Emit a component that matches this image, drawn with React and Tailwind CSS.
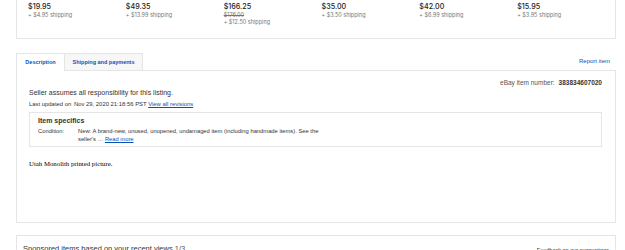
import React from "react";

const prices = [
  { price: "$19.95", ship: "+ $4.95 shipping" },
  { price: "$49.35", ship: "+ $13.99 shipping" },
  { price: "$166.25", was: "$176.00", ship: "+ $12.50 shipping" },
  { price: "$35.00", ship: "+ $3.50 shipping" },
  { price: "$42.00", ship: "+ $6.99 shipping" },
  { price: "$15.95", ship: "+ $3.95 shipping" },
];

const App = () => {
  return (
    <div className="w-[625px] h-[250px] overflow-hidden bg-white text-[#333] font-['Liberation_Sans',Arial,sans-serif]">
      <div className="pl-4 w-[616px]">
        {/* similar items strip, top cut off */}
        <div className="h-[39px] border border-t-0 border-[#e5e5e5] pl-[11px] pt-[2px] flex font-['Inter',sans-serif]">
          {prices.map((p) => (
            <div key={p.price} className="w-[98px] flex flex-col">
              <p className="text-[7.2px] leading-[9px] font-medium text-[#222]">{p.price}</p>
              {p.was && (
                <p className="mt-[1px] text-[5.5px] leading-[6px] text-[#767676] line-through">{p.was}</p>
              )}
              <p className="mt-[1px] text-[5.5px] leading-[6px] text-[#767676]">{p.ship}</p>
            </div>
          ))}
        </div>

        {/* tabs */}
        <div className="mt-[14px] flex items-end justify-between">
          <div className="flex">
            <div className="w-[49px] h-[18px] border border-b-0 border-[#e5e5e5] bg-white flex items-center justify-center text-[5.5px] font-bold text-[#0654ba] relative z-10 -mb-px">
              Description
            </div>
            <div className="w-[78px] h-[17px] border border-l-0 border-b-0 border-[#e5e5e5] bg-[#f7f7f7] flex items-center justify-center text-[5.5px] font-bold text-[#0654ba]">
              Shipping and payments
            </div>
          </div>
          <a className="text-[6px] leading-[8px] text-[#0654ba] pr-[6px] pb-[5px]">Report item</a>
        </div>

        <div className="h-[153px] border border-[#e5e5e5]">
          <div className="flex justify-end items-center pr-[13px] pt-[7px] text-[6.5px] leading-[10px] text-[#555]">
            <span>eBay item number:</span>
            <span className="ml-[4px] font-bold text-[#333]">383834607020</span>
          </div>
          <div className="pl-[12px] pr-[13px]">
            <p className="text-[7px] leading-[9px] text-[#333]">Seller assumes all responsibility for this listing.</p>
            <p className="text-[5.9px] leading-[9px] mt-[3px] text-[#333]">
              Last updated on <span className="ml-[1px]">Nov 29, 2020 21:18:56 PST</span>{" "}
              <a className="text-[#0654ba] underline">View all revisions</a>
            </p>
            <div className="mt-[3px] h-[35px] border border-[#e5e5e5] pl-[8px] pt-[3px]">
              <p className="text-[7px] font-bold text-[#333] leading-[10px]">Item specifics</p>
              <div className="flex mt-[2px] text-[5.8px] leading-[7.5px] text-[#333]">
                <span className="w-[40px] shrink-0">Condition:</span>
                <span className="w-[245px]">
                  New: A brand-new, unused, unopened, undamaged item (including handmade items). See the
                  seller's …{" "}
                  <a className="text-[#0654ba] underline">Read more</a>
                </span>
              </div>
            </div>
            <p className="mt-[12px] text-[6.8px] leading-[10px] text-black font-['Liberation_Serif','Times_New_Roman',serif]">
              Utah Monolith printed picture.
            </p>
          </div>
        </div>

        {/* sponsored */}
        <div className="mt-[12px] h-[30px] border border-[#e5e5e5] px-[6px] pt-[8px] flex justify-between">
          <p className="text-[7.5px] leading-[10px] text-[#333]">
            Sponsored items based on your recent views <span className="text-[#555]">1/3</span>
          </p>
          <a className="text-[5.5px] leading-[8px] text-[#333] pt-[2px]">Feedback on our suggestions</a>
        </div>
      </div>
    </div>
  );
};

export default App;
